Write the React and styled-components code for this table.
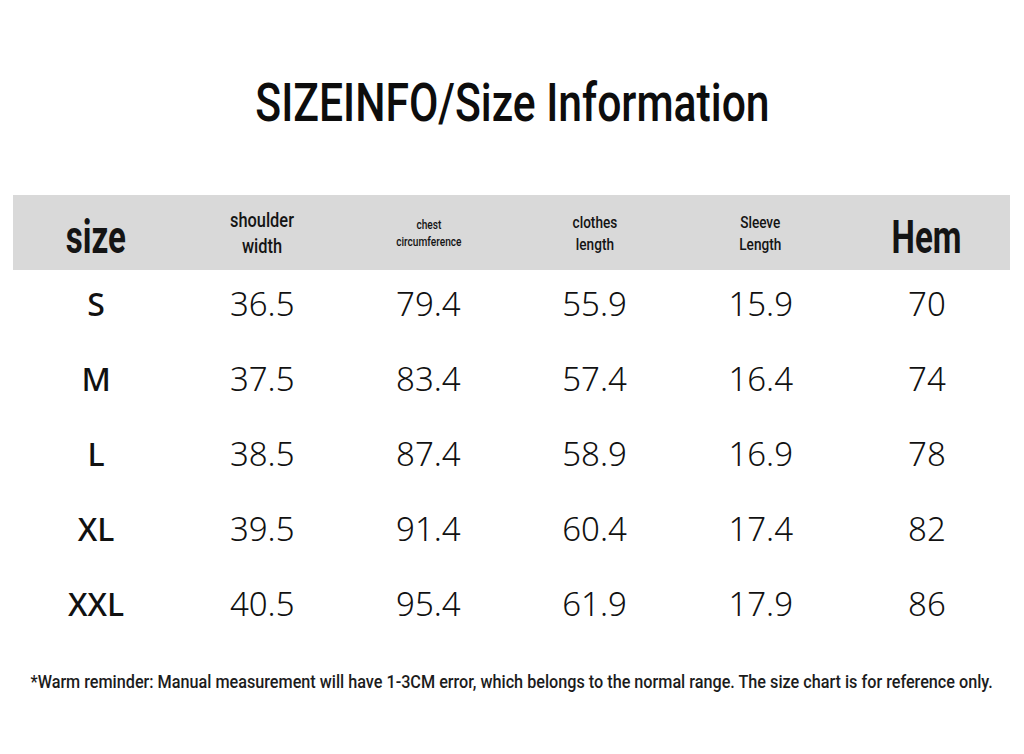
import React from 'react';
import styled, { createGlobalStyle } from 'styled-components';

const GlobalStyle = createGlobalStyle`
  html, body {
    margin: 0;
    padding: 0;
    background: #ffffff;
  }
`;

const Page = styled.div`
  width: 1024px;
  height: 754px;
  background: #fff;
  color: #111;
  display: flex;
  flex-direction: column;
  overflow: hidden;
`;

const Title = styled.h1`
  margin: 0;
  padding-top: 76px;
  height: 195px;
  flex-shrink: 0;
  box-sizing: border-box;
  text-align: center;
  font-family: Roboto, "Liberation Sans", sans-serif;
  font-weight: 500;
  font-size: 54px;
  line-height: 54px;
  color: #0d0d0d;
`;

const Squeeze = styled.span`
  display: inline-block;
  transform: scaleX(${({ $x }) => $x});
  transform-origin: center;
  white-space: nowrap;
`;

const Table = styled.div`
  margin: 0 14px 0 13px;
`;

const HeadRow = styled.div`
  display: grid;
  grid-template-columns: repeat(6, 1fr);
  height: 75px;
  background: #d9d9d9;
`;

const HeadCell = styled.div`
  display: flex;
  align-items: center;
  justify-content: center;
  text-align: center;
  font-family: Roboto, "Liberation Sans", sans-serif;
  font-weight: ${({ $big }) => ($big ? 700 : 500)};
  font-size: ${({ $size }) => $size}px;
  line-height: ${({ $lh }) => $lh}px;
  color: #141414;
  padding-top: ${({ $big }) => ($big ? 8 : 0)}px;
`;

const Row = styled.div`
  display: grid;
  grid-template-columns: repeat(6, 1fr);
  height: 75px;
  padding-bottom: 8px;
  box-sizing: border-box;
  align-items: center;
`;

const Cell = styled.div`
  text-align: center;
  font-family: "Noto Sans", "Open Sans", sans-serif;
  font-size: ${({ $label }) => ($label ? 32 : 33)}px;
  font-weight: ${({ $label }) => ($label ? 500 : 350)};
  color: #111;
`;

const Note = styled.p`
  margin: 27px 0 0;
  display: flex;
  justify-content: center;
  font-family: Roboto, "Liberation Sans", sans-serif;
  font-weight: 500;
  font-size: 18px;
  line-height: 20px;
  color: #1c1c1c;
`;

const headers = [
  { lines: ['size'], size: 46, lh: 46, x: 0.72, big: true },
  { lines: ['shoulder', 'width'], size: 21, lh: 26, x: 0.78 },
  { lines: ['chest', 'circumference'], size: 13, lh: 17, x: 0.78 },
  { lines: ['clothes', 'length'], size: 17, lh: 22, x: 0.8 },
  { lines: ['Sleeve', 'Length'], size: 17, lh: 22, x: 0.8 },
  { lines: ['Hem'], size: 46, lh: 46, x: 0.72, big: true },
];

const rows = [
  ['S', '36.5', '79.4', '55.9', '15.9', '70'],
  ['M', '37.5', '83.4', '57.4', '16.4', '74'],
  ['L', '38.5', '87.4', '58.9', '16.9', '78'],
  ['XL', '39.5', '91.4', '60.4', '17.4', '82'],
  ['XXL', '40.5', '95.4', '61.9', '17.9', '86'],
];

const App = () => {
  return (
    <>
      <GlobalStyle />
      <Page>
        <Title>
          <Squeeze $x={0.79}>SIZEINFO/Size Information</Squeeze>
        </Title>
        <Table>
          <HeadRow>
            {headers.map((h, i) => (
              <HeadCell key={i} $size={h.size} $lh={h.lh} $big={h.big}>
                <Squeeze $x={h.x}>
                  {h.lines.map((l, j) => (
                    <div key={j}>{l}</div>
                  ))}
                </Squeeze>
              </HeadCell>
            ))}
          </HeadRow>
          {rows.map((r) => (
            <Row key={r[0]}>
              {r.map((v, i) => (
                <Cell key={i} $label={i === 0}>{v}</Cell>
              ))}
            </Row>
          ))}
        </Table>
        <Note>
          <Squeeze $x={0.9}>
            *Warm reminder: Manual measurement will have 1-3CM error, which belongs to the normal range. The size chart is for reference only.
          </Squeeze>
        </Note>
      </Page>
    </>
  );
};

export default App;
